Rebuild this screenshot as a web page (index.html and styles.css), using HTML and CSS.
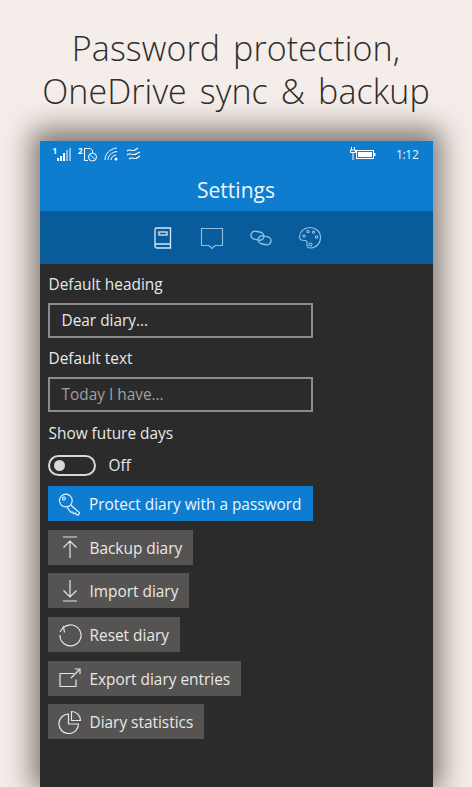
FILE: index.html
```html
<!DOCTYPE html>
<html lang="en">
<head>
  <meta charset="UTF-8">
  <title>Settings</title>
  <link rel="stylesheet" href="styles.css">
</head>
<body>
  <h1 class="headline">Password protection,<br>OneDrive sync &amp; backup</h1>

  <div class="phone">
    <!-- Status bar -->
    <div class="status">
      <div class="status-left">
        <span class="sim">1</span>
        <svg class="ico" width="15" height="14" viewBox="0 0 15 14" fill="#fff">
          <rect x="0" y="11" width="2" height="3"/><rect x="3" y="9" width="2" height="5"/><rect x="6" y="6" width="2" height="8"/>
          <rect x="9" y="3" width="2" height="11" opacity=".5"/><rect x="12" y="1" width="2" height="13" opacity=".5"/>
        </svg>
        <span class="sim sim2">2</span>
        <svg class="ico" width="15" height="15" viewBox="0 0 15 15" fill="none" stroke="#fff" stroke-width="1">
          <path d="M1.500 1.500h6l2 2v2.500M1.500 1.500v12h3.500"/>
          <circle cx="9.500" cy="10" r="4"/><path d="M7 7.500l5 5"/>
        </svg>
        <svg class="ico wifi" width="16" height="14" viewBox="0 0 16 14" fill="none" stroke="#fff" stroke-width="1">
          <path d="M1 13C1 7 6 1.500 13 1M4 13c0-4 3.500-8 9-8.500M7 13c0-2.500 2-4.500 5-5"/>
          <circle cx="12" cy="12" r="1.500" fill="#fff" stroke="none"/>
        </svg>
        <svg class="ico" width="15" height="14" viewBox="0 0 15 14" fill="none" stroke="#fff" stroke-width="1.100">
          <path d="M1 4c3-3 5 1 8-1l3-2M1 8c3-3 6 1 9-1l4-2M3 12c3-3 5 1 8-1l3-2"/>
        </svg>
      </div>
      <div class="status-right">
        <svg class="ico" width="26" height="14" viewBox="0 0 26 14">
          <path d="M1.500 0v3M4.500 0v3M.5 3h5v2.500h-5zM3 5.500V13" fill="none" stroke="#fff" stroke-width="1"/>
          <rect x="6.500" y="3.500" width="17" height="8" fill="none" stroke="#fff"/>
          <rect x="8" y="5" width="14" height="5" fill="#fff"/>
          <rect x="24" y="6" width="1.500" height="3" fill="#fff"/>
        </svg>
        <span class="time">1:12</span>
      </div>
    </div>

    <div class="title">Settings</div>

    <!-- Tabs -->
    <div class="tabs">
      <svg width="24" height="24" viewBox="0 0 24 24" fill="none" stroke="#d5e9f8" stroke-width="1.300">
        <path d="M4 19.500V3.500A1.500 1.500 0 0 1 5.500 2h14v20H6a2 2 0 0 1-2-2.500 2 2 0 0 1 2-1.500h13.500"/>
        <rect x="8" y="6" width="8" height="3"/>
      </svg>
      <svg width="24" height="24" viewBox="0 0 24 24" fill="none" stroke="#8fc0e2" stroke-width="1.100">
        <path d="M1.500 2.500h21v17h-7.500l-3 3-3-3H1.500z"/>
      </svg>
      <svg width="24" height="24" viewBox="0 0 24 24" fill="none" stroke="#8fc0e2" stroke-width="1.400">
        <g transform="rotate(12 12 12)">
          <rect x="1.500" y="6.500" width="13" height="8" rx="4"/>
          <rect x="9.500" y="9.500" width="13" height="8" rx="4"/>
        </g>
      </svg>
      <svg width="24" height="24" viewBox="0 0 24 24" fill="none" stroke="#8fc0e2" stroke-width="1.100">
        <path d="M12 1.500C6 1.500 1.500 6 1.500 11c0 3 3 3.500 5 3.500 2.500 0 3 1.500 2.500 3.500-.5 2.500 1 4 3 4 6 0 10.500-4.500 10.500-10.500S18 1.500 12 1.500z"/>
        <circle cx="6" cy="10" r="1.200"/><circle cx="10" cy="5.500" r="1.200"/><circle cx="15.500" cy="6" r="1.200"/><circle cx="18.500" cy="11" r="1.200"/><circle cx="12.500" cy="18.500" r="1.500"/>
      </svg>
    </div>

    <!-- Settings form -->
    <div class="content">
      <div class="label">Default heading</div>
      <div class="field">Dear diary...</div>
      <div class="label label-next">Default text</div>
      <div class="field field-hint">Today I have...</div>
      <div class="label label-last">Show future days</div>
      <div class="toggle-row">
        <span class="toggle"><span class="knob"></span></span>
        <span>Off</span>
      </div>

      <div class="btn btn-primary">
        <svg width="26" height="24" viewBox="0 0 26 24" fill="none" stroke="#e8f3fb" stroke-width="1.200">
          <circle cx="9" cy="8.500" r="6.500"/><circle cx="7" cy="6.500" r="1.500"/>
          <path d="M14 13l9 8-1 2h-2l-1.500-2-1.500 1-1.500-2-1.500.500-3.500-5"/>
        </svg>
        <span class="btn-text">Protect diary with a password</span>
      </div>
      <div class="btn">
        <svg width="26" height="24" viewBox="0 0 26 24" fill="none" stroke="#e6e6e6" stroke-width="1.200">
          <path d="M6 2h14M13 23V6M6.500 12.500L13 6l6.500 6.500"/>
        </svg>
        <span class="btn-text">Backup diary</span>
      </div>
      <div class="btn">
        <svg width="26" height="24" viewBox="0 0 26 24" fill="none" stroke="#e6e6e6" stroke-width="1.200">
          <path d="M6 22h14M13 1v17M6.500 11.500L13 18l6.500-6.500"/>
        </svg>
        <span class="btn-text">Import diary</span>
      </div>
      <div class="btn">
        <svg width="26" height="24" viewBox="0 0 26 24" fill="none" stroke="#e6e6e6" stroke-width="1.200">
          <path d="M6.500 4.500A10.500 10.500 0 1 1 3 12M3 9l3.500-5 1 5.500"/>
        </svg>
        <span class="btn-text">Reset diary</span>
      </div>
      <div class="btn">
        <svg width="26" height="24" viewBox="0 0 26 24" fill="none" stroke="#e6e6e6" stroke-width="1.200">
          <path d="M17 7.500H3v13h16v-7M14 12l8-8M18 3h5v5"/>
        </svg>
        <span class="btn-text">Export diary entries</span>
      </div>
      <div class="btn">
        <svg width="26" height="24" viewBox="0 0 26 24" fill="none" stroke="#e6e6e6" stroke-width="1.200">
          <path d="M11.500 4a9.800 9.800 0 1 0 10 10H11.500z"/>
          <path d="M14.500 1.500a9 9 0 0 1 9 9h-9z"/>
        </svg>
        <span class="btn-text">Diary statistics</span>
      </div>
    </div>
  </div>
</body>
</html>
```

FILE: styles.css
```css
html, body {
  height: 787px;
  overflow: hidden;
}
body {
  margin: 0;
  background: #f4ede9;
  font-family: "Open Sans", sans-serif;
  color: #e8e8e8;
  display: flex;
  flex-direction: column;
  align-items: center;
}
.headline {
  flex-shrink: 0;
  margin: 0;
  padding-top: 27px;
  height: 141px;
  box-sizing: border-box;
  font-size: 34px;
  font-weight: 300;
  line-height: 43px;
  letter-spacing: 0.1px;
  word-spacing: 4px;
  color: #2e2e2e;
  text-align: center;
  white-space: nowrap;
}
.phone {
  flex-shrink: 0;
  width: 393px;
  height: 646px;
  background: #2b2b2b;
  box-shadow: 0 -4px 26px 8px rgba(50, 42, 34, 0.6);
}
.status {
  height: 26px;
  background: #0e7dd0;
  display: flex;
  justify-content: space-between;
  align-items: center;
  padding: 0 14px 0 13px;
}
.status-left, .status-right {
  display: flex;
  align-items: center;
}
.sim {
  font-size: 8px;
  font-weight: 700;
  color: #fff;
  align-self: flex-start;
  margin-top: -2px;
}
.sim2 {
  margin-left: 6px;
}
.wifi {
  margin-left: 6px;
  margin-right: 6px;
}
.time {
  font-size: 12px;
  letter-spacing: -0.3px;
  color: #e8f3fb;
  margin-left: 20px;
}
.title {
  height: 44px;
  background: #0e7dd0;
  color: #eef6fc;
  font-size: 21px;
  line-height: 46px;
  text-align: center;
}
.tabs {
  height: 53px;
  background: #095c9c;
  display: flex;
  justify-content: center;
  align-items: center;
  gap: 25px;
}
.content {
  padding: 10px 8px;
  font-size: 15.400px;
}
.label {
  height: 21px;
  line-height: 21px;
  margin-bottom: 8px;
  padding-left: 1px;
}
.label-next {
  margin-top: 10px;
}
.label-last {
  margin-top: 11px;
  margin-bottom: 10px;
}
.field {
  width: 265px;
  height: 35px;
  box-sizing: border-box;
  border: 2px solid #8c8c8c;
  padding-left: 12px;
  line-height: 31px;
}
.field-hint {
  color: #a0a0a0;
}
.toggle-row {
  display: flex;
  align-items: center;
  gap: 13px;
  height: 22px;
  margin-bottom: 10px;
}
.toggle {
  width: 48px;
  height: 21px;
  box-sizing: border-box;
  border: 2px solid #d8d8d8;
  border-radius: 11px;
  display: flex;
  align-items: center;
  padding-left: 4px;
}
.knob {
  width: 11px;
  height: 11px;
  border-radius: 50%;
  background: #d8d8d8;
}
.btn {
  width: fit-content;
  height: 35px;
  box-sizing: border-box;
  padding: 0 11px 0 9px;
  margin-bottom: 8.700px;
  background: #565453;
  display: flex;
  align-items: center;
  gap: 7px;
  white-space: nowrap;
}
.btn-text {
  padding-top: 2px;
}
.btn-primary {
  width: 265px;
  background: #0e7dd0;
  color: #eef6fc;
}
```
